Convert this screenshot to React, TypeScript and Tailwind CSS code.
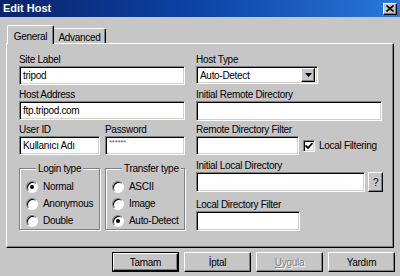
import React from "react";

const sunken =
  "bg-white border border-t-[#808080] border-l-[#808080] border-b-white border-r-white shadow-[inset_1px_1px_0_#000,inset_-1px_-1px_0_#d4d0c8]";
const raised =
  "bg-[#c6c6c6] border border-t-white border-l-white border-b-black border-r-black shadow-[inset_-1px_-1px_0_#808080]";

function Label({ children }: { children: React.ReactNode }) {
  return <div className="h-[12px] leading-[12px] whitespace-nowrap">{children}</div>;
}

function Field({ w, value, h = "h-[19px]" }: { w: string; value?: string; h?: string }) {
  return (
    <div className={`${sunken} ${w} ${h} flex items-center pl-[3px] whitespace-nowrap overflow-hidden`}>
      {value}
    </div>
  );
}

function Radio({ label, checked }: { label: string; checked?: boolean }) {
  return (
    <div className="h-[17px] flex items-center gap-[5px]">
      <div className="w-[12px] h-[12px] rounded-full bg-white border border-t-[#808080] border-l-[#808080] border-b-white border-r-white shadow-[inset_1px_1px_0_#000] flex items-center justify-center">
        {checked && <div className="w-[4px] h-[4px] rounded-full bg-black" />}
      </div>
      <span className="whitespace-nowrap">{label}</span>
    </div>
  );
}

function Group({ title, children }: { title: string; children: React.ReactNode }) {
  return (
    <fieldset className="border border-[#808080] shadow-[1px_1px_0_#fff,inset_1px_1px_0_#fff] pl-[6px] pt-[3px] pb-0 w-full">
      <legend className="ml-[10px] px-[2px] bg-[#c6c6c6] leading-[13px]">{title}</legend>
      {children}
    </fieldset>
  );
}

function Btn({ children, def, disabled }: { children: React.ReactNode; def?: boolean; disabled?: boolean }) {
  return (
    <div className={`w-[67px] h-[20px] ${def ? "border border-black" : ""}`}>
      <div className={`${raised} w-full h-full flex items-center justify-center ${disabled ? "text-[#808080] [text-shadow:1px_1px_0_#fff]" : ""}`}>
        {children}
      </div>
    </div>
  );
}

export default function App() {
  return (
    <div className="w-[400px] h-[276px] overflow-hidden bg-[#c6c6c6] flex flex-col text-black text-[10px] tracking-[-0.3px] font-['Liberation_Sans',Arial,sans-serif]">
      {/* title bar */}
      <div className="h-[17px] bg-gradient-to-r from-[#08246b] via-[#0d44a8] to-[#2a78d8] flex items-center justify-between pl-[3px] pr-[3px]">
        <span className="text-white font-bold text-[11px] tracking-normal">Edit Host</span>
        <div className={`${raised} w-[14px] h-[12px] flex items-center justify-center`}>
          <svg width="8" height="7" viewBox="0 0 8 7">
            <path d="M0.5 0.5 L7.5 6.5 M7.5 0.5 L0.5 6.5" stroke="#000" strokeWidth="1.6" />
          </svg>
        </div>
      </div>

      <div className="px-[6px] mt-[8px]">
        {/* tabs */}
        <div className="flex items-end ml-[1px] h-[18px]">
          <div className="relative z-10 w-[47px] h-[19px] -mb-px bg-[#c6c6c6] border-t border-l border-r border-t-white border-l-white border-r-black shadow-[inset_-1px_0_0_#808080] rounded-t-[2px] flex items-start justify-center pt-[3px]">
            General
          </div>
          <div className="w-[52px] h-[15px] bg-[#c6c6c6] border-t border-r border-t-white border-r-black shadow-[inset_-1px_0_0_#808080] rounded-tr-[2px] flex items-start justify-center pt-[1px]">
            Advanced
          </div>
        </div>

        {/* panel */}
        <div className={`${raised} h-[205px] pl-[12px] pt-[10px] flex gap-[11px]`}>
          {/* left column */}
          <div className="w-[166px] flex flex-col">
            <Label>Site Label</Label>
            <Field w="w-[166px]" value="tripod" />
            <div className="mt-[4px]">
              <Label>Host Address</Label>
            </div>
            <Field w="w-[166px]" value="ftp.tripod.com" />
            <div className="mt-[4px] grid grid-cols-[81px_80px] gap-x-[5px]">
              <Label>User ID</Label>
              <Label>Password</Label>
              <Field w="w-[81px]" value="Kullanıcı Adı" />
              <div className={`${sunken} w-[80px] h-[19px] pl-[3px] pt-[1px] text-[8px] text-[#606060] leading-[10px]`}>******</div>
            </div>
            <div className="mt-[7px] grid grid-cols-[81px_80px] gap-x-[5px]">
              <Group title="Login type">
                <Radio label="Normal" checked />
                <Radio label="Anonymous" />
                <Radio label="Double" />
              </Group>
              <Group title="Transfer type">
                <Radio label="ASCII" />
                <Radio label="Image" />
                <Radio label="Auto-Detect" checked />
              </Group>
            </div>
          </div>

          {/* right column */}
          <div className="w-[187px] flex flex-col">
            <Label>Host Type</Label>
            <div className={`${sunken} w-[122px] h-[18px] flex items-center justify-between pl-[3px] pr-[2px]`}>
              <span>Auto-Detect</span>
              <div className={`${raised} w-[14px] h-[14px] flex items-center justify-center`}>
                <svg width="7" height="4" viewBox="0 0 7 4">
                  <path d="M0 0 H7 L3.5 4 Z" fill="#000" />
                </svg>
              </div>
            </div>
            <div className="mt-[5px]">
              <Label>Initial Remote Directory</Label>
            </div>
            <Field w="w-[186px]" h="h-[20px]" />
            <div className="mt-[3px]">
              <Label>Remote Directory Filter</Label>
            </div>
            <div className="flex items-center">
              <Field w="w-[103px]" />
              <div className={`${sunken} ml-[4px] w-[12px] h-[12px] flex items-center justify-center`}>
                <svg width="8" height="8" viewBox="0 0 8 8">
                  <path d="M0.5 3.5 L3 6 L7.5 1" stroke="#000" strokeWidth="1.8" fill="none" />
                </svg>
              </div>
              <span className="ml-[4px] whitespace-nowrap">Local Filtering</span>
            </div>
            <div className="mt-[5px]">
              <Label>Initial Local Directory</Label>
            </div>
            <div className="flex items-center gap-[3px]">
              <Field w="w-[170px]" h="h-[20px]" />
              <div className={`${raised} w-[15px] h-[20px] flex items-center justify-center`}>?</div>
            </div>
            <div className="mt-[7px]">
              <Label>Local Directory Filter</Label>
            </div>
            <Field w="w-[104px]" h="h-[20px]" />
          </div>
        </div>
      </div>

      {/* bottom buttons */}
      <div className="mt-[4px] flex justify-end gap-[5px] pr-[5px]">
        <Btn def>Tamam</Btn>
        <Btn>İptal</Btn>
        <Btn disabled>
          <span className="underline">U</span>ygula
        </Btn>
        <Btn>Yardım</Btn>
      </div>
    </div>
  );
}
